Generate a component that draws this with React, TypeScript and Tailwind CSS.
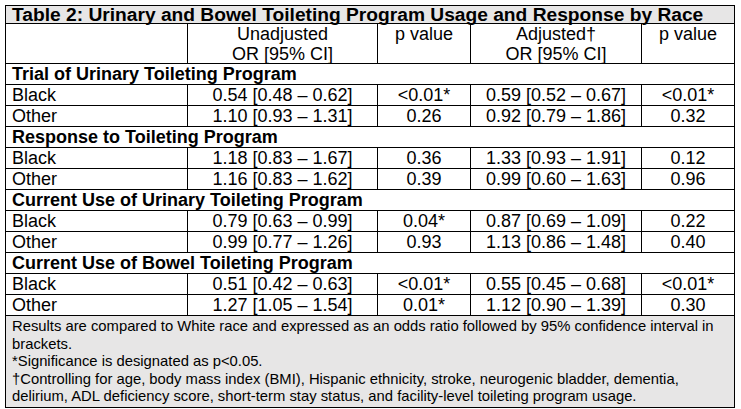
import React from "react";

const font = { fontFamily: '"Liberation Sans", Arial, sans-serif' };

type DataRow = { label: string; u: string; p1: string; a: string; p2: string };
type Section = { title: string; rows: DataRow[] };

const sections: Section[] = [
  {
    title: "Trial of Urinary Toileting Program",
    rows: [
      { label: "Black", u: "0.54 [0.48 – 0.62]", p1: "<0.01*", a: "0.59 [0.52 – 0.67]", p2: "<0.01*" },
      { label: "Other", u: "1.10 [0.93 – 1.31]", p1: "0.26", a: "0.92 [0.79 – 1.86]", p2: "0.32" },
    ],
  },
  {
    title: "Response to Toileting Program",
    rows: [
      { label: "Black", u: "1.18 [0.83 – 1.67]", p1: "0.36", a: "1.33 [0.93 – 1.91]", p2: "0.12" },
      { label: "Other", u: "1.16 [0.83 – 1.62]", p1: "0.39", a: "0.99 [0.60 – 1.63]", p2: "0.96" },
    ],
  },
  {
    title: "Current Use of Urinary Toileting Program",
    rows: [
      { label: "Black", u: "0.79 [0.63 – 0.99]", p1: "0.04*", a: "0.87 [0.69 – 1.09]", p2: "0.22" },
      { label: "Other", u: "0.99 [0.77 – 1.26]", p1: "0.93", a: "1.13 [0.86 – 1.48]", p2: "0.40" },
    ],
  },
  {
    title: "Current Use of Bowel Toileting Program",
    rows: [
      { label: "Black", u: "0.51 [0.42 – 0.63]", p1: "<0.01*", a: "0.55 [0.45 – 0.68]", p2: "<0.01*" },
      { label: "Other", u: "1.27 [1.05 – 1.54]", p1: "0.01*", a: "1.12 [0.90 – 1.39]", p2: "0.30" },
    ],
  },
];

export default function App() {
  return (
    <div className="bg-white w-[741px] h-[409px] pt-[5px] pl-[5px] text-black" style={font}>
      <div className="w-[730px] border border-black">
        <div className="h-[18px] bg-[#e7e6e6] border-b border-black pl-[6px] text-[19.2px] leading-[18px] font-bold whitespace-nowrap">
          Table 2: Urinary and Bowel Toileting Program Usage and Response by Race
        </div>
        <div className="flex h-[40px] border-b border-black text-[18px] leading-[20px]">
          <div className="w-[182px] border-r border-black" />
          <div className="w-[190px] border-r border-black text-center">
            <div>Unadjusted</div>
            <div>OR [95% CI]</div>
          </div>
          <div className="w-[93px] border-r border-black text-center">p value</div>
          <div className="w-[171px] border-r border-black text-center">
            <div>Adjusted†</div>
            <div>OR [95% CI]</div>
          </div>
          <div className="w-[92px] text-center">p value</div>
        </div>
        {sections.map((s) => (
          <React.Fragment key={s.title}>
            <div className="h-[21px] border-b border-black pl-[6px] text-[18px] leading-[20px] font-bold whitespace-nowrap">
              {s.title}
            </div>
            {s.rows.map((r) => (
              <div key={s.title + r.label} className="flex h-[21px] border-b border-black text-[18px] leading-[20px] whitespace-nowrap">
                <div className="w-[182px] border-r border-black pl-[6px]">{r.label}</div>
                <div className="w-[190px] border-r border-black text-center">{r.u}</div>
                <div className="w-[93px] border-r border-black text-center">{r.p1}</div>
                <div className="w-[171px] border-r border-black text-center">{r.a}</div>
                <div className="w-[92px] text-center">{r.p2}</div>
              </div>
            ))}
          </React.Fragment>
        ))}
        <div className="bg-[#e7e6e6] pl-[6px] pt-[2px] pb-[1px] text-[14.8px] leading-[17.5px] whitespace-nowrap">
          <div>Results are compared to White race and expressed as an odds ratio followed by 95% confidence interval in</div>
          <div>brackets.</div>
          <div>*Significance is designated as p&lt;0.05.</div>
          <div>†Controlling for age, body mass index (BMI), Hispanic ethnicity, stroke, neurogenic bladder, dementia,</div>
          <div>delirium, ADL deficiency score, short-term stay status, and facility-level toileting program usage.</div>
        </div>
      </div>
    </div>
  );
}
